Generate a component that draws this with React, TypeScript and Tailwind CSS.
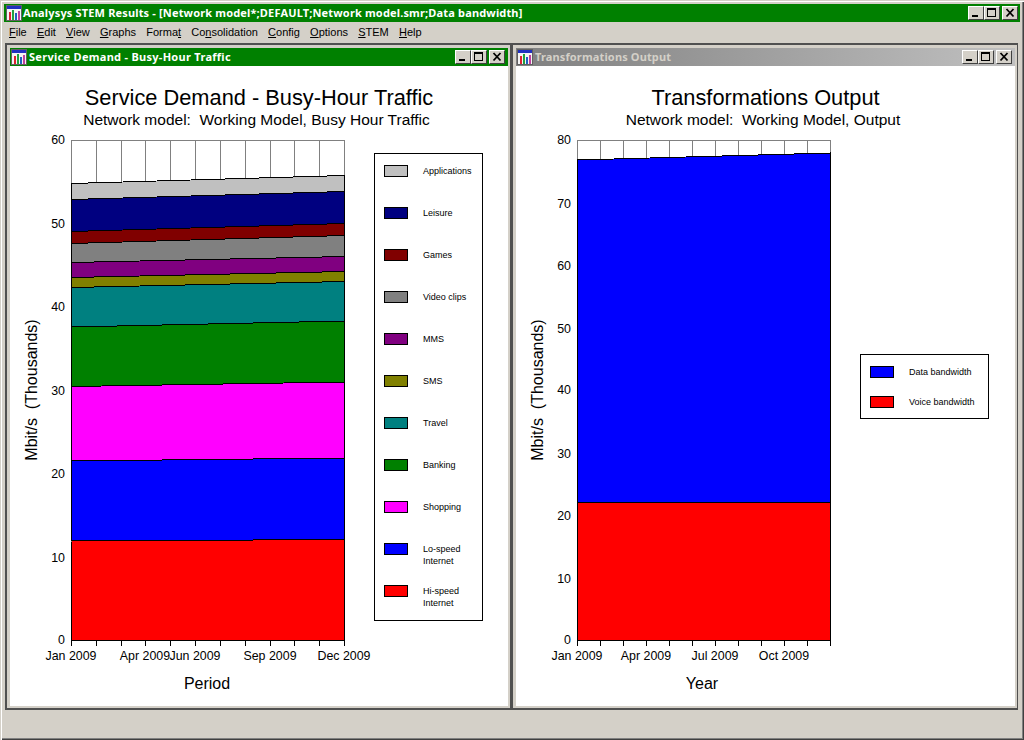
const CHART_FONT = "font-['Liberation_Sans',Arial,sans-serif]";

const menu: [string, number][] = [
  ['File', 0],
  ['Edit', 0],
  ['View', 0],
  ['Graphs', 0],
  ['Format', 5],
  ['Consolidation', 2],
  ['Config', 0],
  ['Options', 0],
  ['STEM', 0],
  ['Help', 0],
];

type Series = { name: string; color: string; top: [number, number] };

const demand: Series[] = [
  { name: 'Hi-speed Internet', color: '#ff0000', top: [541, 539.5] },
  { name: 'Lo-speed Internet', color: '#0000ff', top: [461, 458] },
  { name: 'Shopping', color: '#ff00ff', top: [386.5, 382] },
  { name: 'Banking', color: '#008000', top: [327, 321] },
  { name: 'Travel', color: '#008080', top: [287.5, 281.5] },
  { name: 'SMS', color: '#808000', top: [277.5, 271.5] },
  { name: 'MMS', color: '#800080', top: [262.5, 256.5] },
  { name: 'Video clips', color: '#808080', top: [243.5, 235.5] },
  { name: 'Games', color: '#800000', top: [231.5, 223.5] },
  { name: 'Leisure', color: '#000080', top: [199.5, 191.5] },
  { name: 'Applications', color: '#c0c0c0', top: [183.5, 175.5] },
];

const output: Series[] = [
  { name: 'Voice bandwidth', color: '#ff0000', top: [502.5, 502.5] },
  { name: 'Data bandwidth', color: '#0000ff', top: [160, 153] },
];

const demandTicks = [71, 96, 121, 145, 170, 195, 220, 245, 270, 294, 319, 344];
const outputTicks = [577, 600, 623, 646, 669, 692, 715, 738, 761, 784, 807, 830];

function WindowButtons() {
  return (
    <div className="flex items-center">
      <CaptionButton kind="min" />
      <CaptionButton kind="max" />
      <CaptionButton kind="close" className="ml-0.5" />
    </div>
  );
}

function CaptionButton({ kind, className = '' }: { kind: 'min' | 'max' | 'close'; className?: string }) {
  return (
    <div
      className={`w-4 h-3.5 bg-[#d4d0c8] border border-t-white border-l-white border-r-[#404040] border-b-[#404040] ${className}`}
    >
      <svg width="14" height="12" viewBox="0 0 14 12" shapeRendering="crispEdges">
        {kind === 'min' && <rect x="3" y="8" width="6" height="2" fill="#000" />}
        {kind === 'max' && <path d="M2 1h9v2H3v6h7V3h1v7H2z" fill="#000" />}
        {kind === 'close' && (
          <path d="M3.5 2l7 7.5M10.5 2l-7 7.5" fill="none" stroke="#000" strokeWidth="1.8" shapeRendering="auto" />
        )}
      </svg>
    </div>
  );
}

function AppIcon() {
  return (
    <svg width="16" height="16" viewBox="0 0 16 16" shapeRendering="crispEdges" className="shrink-0">
      <rect x="0.5" y="0.5" width="15" height="15" fill="#f4f4f4" stroke="#606060" />
      <rect x="1" y="1" width="14" height="3" fill="#2030c0" />
      <rect x="3" y="7" width="2" height="8" fill="#e02030" />
      <rect x="6" y="5" width="2" height="10" fill="#20a040" />
      <rect x="9" y="8" width="2" height="7" fill="#2060c0" />
      <rect x="12" y="6" width="2" height="9" fill="#c040a0" />
    </svg>
  );
}

function PlotArea({ series, ticks, x0, x1, top, tickLabels, yLabels, xTitle, xTitleX, viewBox, width }: {
  series: Series[];
  ticks: number[];
  x0: number;
  x1: number;
  top: number;
  tickLabels: [string, number][];
  yLabels: [string, number][];
  xTitle: string;
  xTitleX: number;
  viewBox: string;
  width: number;
}) {
  const bottom = 640;
  return (
    <svg width={width} height={570} viewBox={viewBox} className={`shrink-0 ${CHART_FONT}`}>
      <g shapeRendering="crispEdges">
        <rect x={x0 + 0.5} y={top + 0.5} width={x1 - x0} height={bottom - top} fill="#fff" stroke="#808080" />
        {ticks.map((t) => (
          <line key={t} x1={t + 0.5} x2={t + 0.5} y1={top} y2={bottom + 6} stroke="#808080" />
        ))}
        {series.map((s, i) => {
          const prev = i === 0 ? [bottom, bottom] : series[i - 1].top;
          return (
            <polygon
              key={s.name}
              points={`${x0 + 0.5},${s.top[0]} ${x1 + 0.5},${s.top[1]} ${x1 + 0.5},${prev[1]} ${x0 + 0.5},${prev[0]}`}
              fill={s.color}
              stroke="#000"
            />
          );
        })}
        {ticks.map((t) => (
          <line key={t} x1={t + 0.5} x2={t + 0.5} y1={bottom} y2={bottom + 6} stroke="#000" />
        ))}
        <line x1={x0} x2={x1 + 1} y1={bottom + 0.5} y2={bottom + 0.5} stroke="#000" />
      </g>
      {yLabels.map(([label, y]) => (
        <text key={label} x={x0 - 6} y={y + 4} textAnchor="end" fontSize="12.4" fill="#000">{label}</text>
      ))}
      {tickLabels.map(([label, x]) => (
        <text key={label} x={x} y={660} textAnchor="middle" fontSize="12.4" fill="#000">{label}</text>
      ))}
      <text x={xTitleX} y={689} textAnchor="middle" fontSize="16" fill="#000">{xTitle}</text>
      <text
        x={x0 - 34}
        y={390}
        textAnchor="middle"
        fontSize="16"
        fill="#000"
        xmlSpace="preserve"
        transform={`rotate(-90 ${x0 - 34} 390)`}
      >
        {'Mbit/s  (Thousands)'}
      </text>
    </svg>
  );
}

function LegendRow({ item, rowClass, labelClass }: { item: Series; rowClass: string; labelClass: string }) {
  return (
    <div className={`flex items-start ${rowClass}`}>
      <div className="w-6 h-3 shrink-0 border border-black" style={{ backgroundColor: item.color }} />
      <div className={`ml-[15px] text-[9px] leading-3 text-black ${labelClass}`}>{item.name}</div>
    </div>
  );
}

function ChildWindow({ title, active, className, children }: {
  title: string;
  active: boolean;
  className: string;
  children: React.ReactNode;
}) {
  return (
    <div
      className={`flex flex-col border-t-2 border-l-2 border-r border-b-2 border-[#505050] pt-[3px] pl-[3px] pr-0.5 pb-0.5 ${className}`}
    >
      <div
        className={`h-[18px] shrink-0 flex items-center pl-px pr-[3px] ${active ? 'bg-[#008000] text-white tracking-[0.29px]' : 'bg-gradient-to-r from-[#808080] to-[#c0c0c0] text-[#d4d0c8] tracking-[0.14px]'}`}
      >
        <AppIcon />
        <span className="ml-0.5 flex-1 text-[11px] font-bold font-['Noto_Sans',sans-serif] whitespace-nowrap">{title}</span>
        <WindowButtons />
      </div>
      <div className={`flex-1 min-h-0 bg-white text-black overflow-hidden ${CHART_FONT}`}>{children}</div>
    </div>
  );
}

function ChartHeading({ title, subtitle }: { title: string; subtitle: string }) {
  return (
    <div className="h-16 pt-5 text-center text-black whitespace-pre">
      <div className="text-[21.8px] leading-6">{title}</div>
      <div className="text-[15.5px] leading-5 pr-[5px]">{subtitle}</div>
    </div>
  );
}

export default function App() {
  return (
    <div className="w-[1024px] h-[740px] flex flex-col bg-[#d4d0c8] overflow-hidden shadow-[inset_1px_1px_0_#d4d0c8,inset_2px_2px_0_#fff,inset_-1px_-1px_0_#404040,inset_-2px_-2px_0_#808080]">
      <div className="h-[18px] mt-1 mx-1 flex items-center bg-[#008000] text-white px-0.5 shrink-0">
        <AppIcon />
        <span className="ml-px flex-1 text-[11px] font-bold font-['Noto_Sans',sans-serif] tracking-[0.16px] whitespace-nowrap">
          Analysys STEM Results - [Network model*;DEFAULT;Network model.smr;Data bandwidth]
        </span>
        <WindowButtons />
      </div>
      <div className={`h-[21px] shrink-0 flex items-center pl-[9px] gap-[10.2px] text-[11px] text-black ${CHART_FONT}`}>
        {menu.map(([label, idx]) => (
          <span key={label}>
            {label.slice(0, idx)}
            <span className="underline">{label[idx]}</span>
            {label.slice(idx + 1)}
          </span>
        ))}
      </div>
      <div className="h-[667px] shrink-0 flex pl-[5px]">
        <ChildWindow title="Service Demand - Busy-Hour Traffic" active className="w-[506px]">
          <ChartHeading title="Service Demand - Busy-Hour Traffic" subtitle="Network model:  Working Model, Busy Hour Traffic" />
          <div className="flex items-start">
            <PlotArea
              series={demand}
              ticks={demandTicks}
              x0={71}
              x1={344}
              top={140}
              width={364}
              viewBox="10 130 364 570"
              yLabels={[['60', 140], ['50', 224], ['40', 307], ['30', 391], ['20', 474], ['10', 558], ['0', 640]]}
              tickLabels={[['Jan 2009', 71], ['Apr 2009', 145], ['Jun 2009', 195], ['Sep 2009', 270], ['Dec 2009', 344]]}
              xTitle="Period"
              xTitleX={207}
            />
            <div className="mt-[23px] w-[109px] h-[468px] border border-black pt-[11px] pl-[9px]">
              {[...demand].reverse().map((s) => (
                <LegendRow key={s.name} item={s} rowClass="h-[42px]" labelClass="w-[50px]" />
              ))}
            </div>
          </div>
        </ChildWindow>
        <ChildWindow title="Transformations Output" active={false} className="w-[507px]">
          <ChartHeading title="Transformations Output" subtitle="Network model:  Working Model, Output" />
          <div className="flex items-start">
            <PlotArea
              series={output}
              ticks={outputTicks}
              x0={577}
              x1={830}
              top={140}
              width={344}
              viewBox="516 130 344 570"
              yLabels={[['80', 140], ['70', 204], ['60', 266], ['50', 329], ['40', 390], ['30', 454], ['20', 516], ['10', 579], ['0', 640]]}
              tickLabels={[['Jan 2009', 577], ['Apr 2009', 646], ['Jul 2009', 715], ['Oct 2009', 784]]}
              xTitle="Year"
              xTitleX={702}
            />
            <div className="mt-[224px] w-[129px] h-[65px] border border-black pt-[11px] pl-[9px]">
              {[...output].reverse().map((s) => (
                <LegendRow key={s.name} item={s} rowClass="h-[30px]" labelClass="whitespace-nowrap" />
              ))}
            </div>
          </div>
        </ChildWindow>
      </div>
    </div>
  );
}
